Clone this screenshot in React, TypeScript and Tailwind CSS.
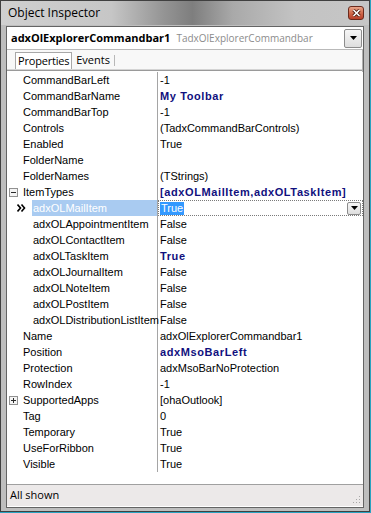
import React from "react";

type Row = { n: string; v: string; bold?: boolean; sub?: boolean; exp?: "minus" | "plus"; sel?: boolean };

const rows: Row[] = [
  { n: "CommandBarLeft", v: "-1" },
  { n: "CommandBarName", v: "My Toolbar", bold: true },
  { n: "CommandBarTop", v: "-1" },
  { n: "Controls", v: "(TadxCommandBarControls)" },
  { n: "Enabled", v: "True" },
  { n: "FolderName", v: "" },
  { n: "FolderNames", v: "(TStrings)" },
  { n: "ItemTypes", v: "[adxOLMailItem,adxOLTaskItem]", bold: true, exp: "minus" },
  { n: "adxOLMailItem", v: "True", sub: true, sel: true },
  { n: "adxOLAppointmentItem", v: "False", sub: true },
  { n: "adxOLContactItem", v: "False", sub: true },
  { n: "adxOLTaskItem", v: "True", sub: true, bold: true },
  { n: "adxOLJournalItem", v: "False", sub: true },
  { n: "adxOLNoteItem", v: "False", sub: true },
  { n: "adxOLPostItem", v: "False", sub: true },
  { n: "adxOLDistributionListItem", v: "False", sub: true },
  { n: "Name", v: "adxOlExplorerCommandbar1" },
  { n: "Position", v: "adxMsoBarLeft", bold: true },
  { n: "Protection", v: "adxMsoBarNoProtection" },
  { n: "RowIndex", v: "-1" },
  { n: "SupportedApps", v: "[ohaOutlook]", exp: "plus" },
  { n: "Tag", v: "0" },
  { n: "Temporary", v: "True" },
  { n: "UseForRibbon", v: "True" },
  { n: "Visible", v: "True" },
];

function ExpBox({ kind }: { kind: "minus" | "plus" }) {
  return (
    <svg width="9" height="9" viewBox="0 0 9 9" className="absolute left-[2px] top-[4px]">
      <rect x="0.5" y="0.5" width="8" height="8" fill="#f4f4f4" stroke="#919191" />
      <line x1="2" y1="4.5" x2="7" y2="4.5" stroke="#2a2a2a" />
      {kind === "plus" && <line x1="4.5" y1="2" x2="4.5" y2="7" stroke="#2a2a2a" />}
    </svg>
  );
}

function Chevrons() {
  return (
    <svg width="9" height="8" viewBox="0 0 9 8" className="absolute left-[10px] top-[4px]">
      <path d="M0.5 0.5 L3.5 4 L0.5 7.5" fill="none" stroke="#000" strokeWidth="1.6" />
      <path d="M4.5 0.5 L7.5 4 L4.5 7.5" fill="none" stroke="#000" strokeWidth="1.6" />
    </svg>
  );
}

function DropBtn({ w, h }: { w: number; h: number }) {
  return (
    <div
      className="flex items-center justify-center rounded-[2px] border border-[#8c8c8c] bg-[linear-gradient(#f6f6f6,#dedede)]"
      style={{ width: w, height: h }}
    >
      <svg width="7" height="4" viewBox="0 0 7 4">
        <path d="M0 0 H7 L3.5 4 Z" fill="#000" />
      </svg>
    </div>
  );
}

export default function App() {
  const grid = "font-['Liberation_Sans',Arial,sans-serif] text-[11px]";
  return (
    <div className="w-[371px] h-[513px] bg-[#2aa3c1] overflow-hidden">
      <div className="w-[370px] h-[512px] border border-[#404040] bg-[#bebebe] flex flex-col">
        {/* Title bar */}
        <div className="h-[24px] flex items-center pl-[7px] pr-[5px] bg-[linear-gradient(90deg,#d0d0d0_0%,#c6c6c6_30%,#959595_44%,#7e7e7e_52%,#a9a9a9_63%,#c3c3c3_80%,#c6c6c6_100%)]">
          <span className="font-['Open_Sans',sans-serif] text-[12px] text-black leading-none">Object Inspector</span>
          <div className="ml-auto w-[16px] h-[14px] rounded-[3px] border border-[#6a2a1c] bg-[linear-gradient(#e9a58a,#d06a4c_50%,#b8402a)] flex items-center justify-center">
            <svg width="9" height="8" viewBox="0 0 9 8">
              <path d="M1.5 1 L7.5 7 M7.5 1 L1.5 7" stroke="#4a1a10" strokeWidth="3.2" />
              <path d="M1.5 1 L7.5 7 M7.5 1 L1.5 7" stroke="#fff" strokeWidth="1.6" />
            </svg>
          </div>
        </div>
        {/* Panel */}
        <div className="h-[482px] mt-[1px] mx-[5px] border border-[#646464] bg-white flex flex-col">
          {/* Combo */}
          <div className="h-[23px] flex items-center pl-[4px] pr-[1px] border-b border-[#b9b9b9]">
            <span className="font-['Open_Sans',sans-serif] font-bold text-[11px] text-black">adxOlExplorerCommandbar1</span>
            <span className="ml-[6px] font-['Open_Sans',sans-serif] text-[10px] text-[#8c8c8c]">TadxOlExplorerCommandbar</span>
            <div className="ml-auto">
              <DropBtn w={18} h={19} />
            </div>
          </div>
          {/* Tabs */}
          <div className="h-[22px] flex flex-col bg-[#f8f8f8] border-r border-[#b0b0b0]">
            <div className="h-[19px] flex items-end pl-[8px]">
              <div className="h-[17px] px-[2px] border border-b-0 border-[#a8a8a8] bg-white flex items-center font-['Open_Sans',sans-serif] text-[11px] tracking-[-0.2px] text-black">
                Properties
              </div>
              <div className="h-[17px] pl-[4px] flex items-center font-['Open_Sans',sans-serif] text-[11px] text-black">
                Events
                <span className="ml-[4px] w-px h-[11px] bg-[#b8b8b8]" />
              </div>
            </div>
            <div className="h-px bg-[#d4d4d4]" />
            <div className="h-px bg-[#9a9a9a]" />
            <div className="h-px bg-white" />
          </div>
          {/* Grid */}
          <div className={`h-[412px] bg-white ${grid} text-black leading-[16px]`}>
            {rows.map((r) => (
              <div key={r.n} className="h-[16px] flex">
                <div className="relative w-[150px] shrink-0 whitespace-nowrap">
                  {r.exp && <ExpBox kind={r.exp} />}
                  {r.sel && <Chevrons />}
                  {r.sel ? (
                    <div className="ml-[25px] h-[16px] bg-[#a9cbf1] text-white pl-px">{r.n}</div>
                  ) : (
                    <div className={r.sub ? "pl-[26px]" : "pl-[16px]"}>{r.n}</div>
                  )}
                </div>
                <div className="flex-1 border-l border-[#a5a5a5] whitespace-nowrap">
                  {r.sel ? (
                    <div className="h-[16px] border border-dotted border-[#7a7a7a] flex items-center pl-px pr-[1px]">
                      <span className="bg-[#3399ff] text-white leading-[13px] px-[1px]">{r.v}</span>
                      <div className="ml-auto">
                        <DropBtn w={14} h={13} />
                      </div>
                    </div>
                  ) : (
                    <div className={`pl-[2px] ${r.bold ? "font-bold tracking-[0.6px] text-[#10107e]" : ""}`}>{r.v}</div>
                  )}
                </div>
              </div>
            ))}
          </div>
          {/* Status */}
          <div className="h-[22px] border-t border-[#a0a0a0] bg-[#ece9e9] flex items-center pl-[3px] relative">
            <span className="font-['Open_Sans',sans-serif] text-[11px] text-black">All shown</span>
            <svg width="8" height="8" viewBox="0 0 8 8" className="absolute right-[2px] bottom-[2px]">
              <rect x="6" y="0" width="1" height="1" fill="#a8a8a8" />
              <rect x="3" y="3" width="1" height="1" fill="#a8a8a8" />
              <rect x="6" y="3" width="1" height="1" fill="#a8a8a8" />
              <rect x="0" y="6" width="1" height="1" fill="#a8a8a8" />
              <rect x="3" y="6" width="1" height="1" fill="#a8a8a8" />
              <rect x="6" y="6" width="1" height="1" fill="#a8a8a8" />
            </svg>
          </div>
        </div>
      </div>
    </div>
  );
}
